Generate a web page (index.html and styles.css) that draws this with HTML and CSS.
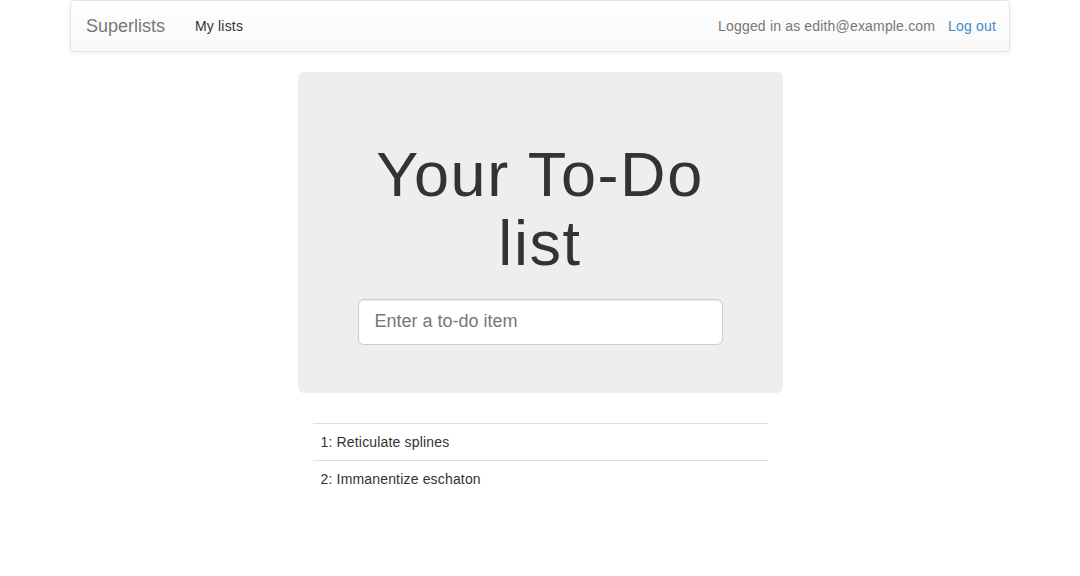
FILE: index.html
```html
<!DOCTYPE html>
<html lang="en">
<head>
<meta charset="utf-8">
<title>To-Do lists</title>
<link rel="stylesheet" href="styles.css">
</head>
<body>
<div class="container">
  <nav class="navbar">
    <div class="nav-left">
      <a class="brand" href="#">Superlists</a>
      <a class="nav-link" href="#">My lists</a>
    </div>
    <div class="nav-right">
      <span class="nav-text">Logged in as edith@example.com</span>
      <a class="logout" href="#">Log out</a>
    </div>
  </nav>

  <div class="row">
    <div class="jumbotron">
      <h1>Your To-Do list</h1>
      <form class="new-item">
        <input class="item-input" type="text" placeholder="Enter a to-do item">
      </form>
    </div>
  </div>

  <div class="row">
    <div class="list-col">
      <table class="items">
        <tr><td>1: Reticulate splines</td></tr>
        <tr><td>2: Immanentize eschaton</td></tr>
      </table>
    </div>
  </div>
</div>
</body>
</html>
```

FILE: styles.css
```css
* { box-sizing: border-box; }
html, body { margin: 0; padding: 0; }
body {
  font-family: "Liberation Sans", Arial, sans-serif;
  font-size: 14px;
  line-height: 20px;
  letter-spacing: 0.17px;
  color: #333;
  background: #fff;
}
a { text-decoration: none; }

.container {
  width: 940px;
  margin: 0 auto;
}

.navbar {
  display: flex;
  justify-content: space-between;
  align-items: center;
  height: 52px;
  margin-bottom: 20px;
  border: 1px solid #e4e4e4;
  border-radius: 4px;
  background: linear-gradient(to bottom, #fff 0, #f8f8f8 100%);
  box-shadow: inset 0 1px 0 rgba(255,255,255,.15), 0 1px 5px rgba(0,0,0,.075);
}
.nav-left { display: flex; align-items: center; padding-left: 15px; }
.brand {
  font-size: 18px;
  line-height: 20px;
  letter-spacing: 0;
  color: #777;
  padding: 15px 0;
}
.nav-link {
  color: #333;
  padding: 15px 0 15px 30px;
}
.nav-right { display: flex; align-items: center; padding-right: 13px; gap: 13px; }
.nav-text { color: #777; }
.logout { color: #428bca; }

.row {
  display: flex;
  justify-content: center;
}

.jumbotron {
  width: 485px;
  margin-bottom: 30px;
  padding: 48px 60px;
  background: #eee;
  border-radius: 6px;
  text-align: center;
}
.jumbotron h1 {
  margin: 20px 0 20px;
  font-size: 63px;
  line-height: 1.1;
  font-weight: 500;
  letter-spacing: 1.6px;
  color: #333;
}
.new-item { margin: 0; }
.item-input {
  display: block;
  width: 100%;
  height: 46px;
  padding: 10px 16px;
  font-family: inherit;
  font-size: 18px;
  line-height: 1.33;
  letter-spacing: 0;
  color: #555;
  background: #fff;
  border: 1px solid #ccc;
  border-radius: 6px;
  box-shadow: inset 0 1px 1px rgba(0,0,0,.075);
}
.item-input::placeholder { color: #777; }

.list-col {
  width: 485px;
  padding: 0 15px;
}
.items {
  width: 100%;
  border-collapse: collapse;
  border-spacing: 0;
}
.items td {
  padding: 8px;
  line-height: 20px;
  border-top: 1px solid #ddd;
  text-align: left;
}
```
